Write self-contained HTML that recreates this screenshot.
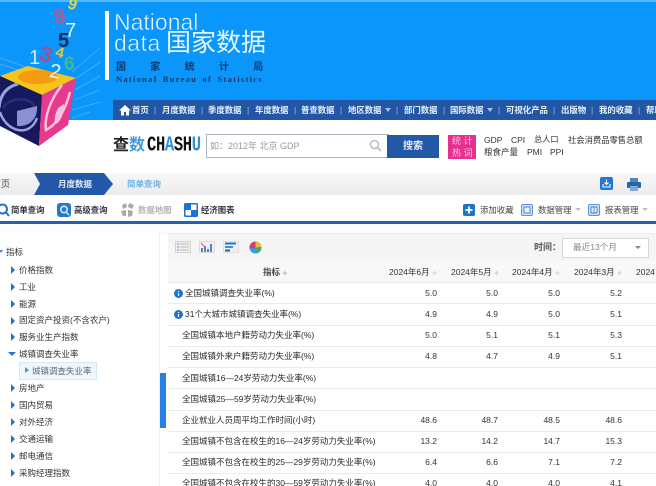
<!DOCTYPE html>
<html><head><meta charset="utf-8">
<style>
html,body{margin:0;padding:0;background:#fff}
#p{position:relative;width:656px;height:486px;overflow:hidden;background:#fff;font-family:"Liberation Sans","Noto Sans CJK SC",sans-serif;font-size:8.5px;color:#333;filter:blur(.35px)}
#p div{position:absolute;white-space:nowrap}
.n{top:100px;height:20px;line-height:20px;color:#e8f0fa;font-size:8.4px;font-weight:bold}
.q{top:100px;height:20px;line-height:20px;color:#9db8de;font-size:8.4px}
.t{line-height:12px;color:#333;font-size:8.5px}
.tr{position:absolute}
.ar{width:0;height:0;border:4px solid transparent;border-left:4.5px solid #1f74cf;border-right:0}
.ln{left:168px;width:488px;height:1px;background:#ebebeb}
.l{left:182px;color:#2a2a2a;font-size:8.5px;line-height:12px}
.v{width:40px;text-align:right;font-size:8.5px;line-height:12px;color:#333}
.h{top:266px;font-size:8.5px;line-height:12px;color:#333}
.s{color:#bbb;font-size:6px}
.k{font-size:8.5px;line-height:12px;color:#333}
.b{font-size:8.4px;line-height:12px;color:#334;font-weight:bold}
</style></head><body><div id="p">
<!-- header -->
<div style="left:0;top:0;width:656px;height:120px;background:#0a96fb"></div>
<div style="left:0;top:0;width:656px;height:2px;background:#4fb8fb"></div>
<svg style="position:absolute;left:0;top:0" width="110" height="150" viewBox="0 0 110 150">
<g stroke="#8ed0fc" stroke-width=".8" fill="none" opacity=".55"><path d="M0 58 L40 72M0 64L30 74M72 72L100 48M74 80L100 62M75 90L100 76M74 100L100 90M72 110L100 102M72 118L90 112"/></g>
<polygon points="0,76 28,66 76,78 42,95" fill="#f6c41a"/>
<ellipse cx="38" cy="77" rx="20" ry="7" fill="#f49b10"/>
<polygon points="0,76 42,95 39,146 0,126" fill="#16195c"/>
<polygon points="42,95 76,78 68,125 39,146" fill="#e9398e"/>
<path d="M18 84 C6 87 0 95 -1 108" fill="none" stroke="#9aa0dc" stroke-width="3"/>
<path d="M0 112 C6 132 30 138 37 118" fill="none" stroke="#9aa0dc" stroke-width="2.5"/>
<path d="M3 108 C8 98 28 96 35 106" fill="none" stroke="#262b78" stroke-width="3"/>
<path d="M17 111L37 106C38 118 30 127 17 126Z" fill="#8b90d0"/>
<path d="M62 85C50 100 44 118 46 130C58 124 66 108 70 92" fill="none" stroke="#f8c3dd" stroke-width="2.5"/>
<path d="M58 108C54 116 54 122 56 124C62 120 64 112 64 104Z" fill="#f8c3dd"/>
<text x="29" y="64" font-size="20" fill="#cfeafc" font-family="Liberation Sans">1</text>
<text x="40" y="62" font-size="22" font-weight="bold" fill="#b14a8a" font-family="Liberation Sans" transform="rotate(15 47 55)">3</text>
<text x="50" y="78" font-size="20" fill="#e8f4fc" font-family="Liberation Sans" transform="rotate(10 56 70)">2</text>
<text x="56" y="58" font-size="15" font-weight="bold" fill="#e3c73f" font-family="Liberation Sans" transform="rotate(15 62 52)">4</text>
<text x="64" y="70" font-size="19" font-weight="bold" fill="#3fb98c" font-family="Liberation Sans">6</text>
<text x="58" y="47" font-size="20" font-weight="bold" fill="#0e2a5c" font-family="Liberation Sans">5</text>
<text x="65" y="37" font-size="20" fill="#e8f4fc" font-family="Liberation Sans">7</text>
<text x="54" y="23" font-size="20" font-weight="bold" fill="#b85a8c" font-family="Liberation Sans" transform="rotate(-12 60 16)">8</text>
<text x="68" y="10" font-size="16" font-weight="bold" fill="#d8d65a" font-family="Liberation Sans" transform="rotate(20 74 5)">9</text>
</svg>
<div style="left:105px;top:11px;width:4px;height:69px;background:#fff"></div>
<div style="left:114px;top:8px;font-size:23px;line-height:28px;color:#eaf6fe;-webkit-text-stroke:.5px #0a96fb">National</div>
<div style="left:114px;top:29px;font-size:23px;line-height:28px;color:#eaf6fe;letter-spacing:.5px;-webkit-text-stroke:.5px #0a96fb">data</div>
<div style="left:166px;top:28px;font-size:25px;line-height:30px;color:#eaf6fe">国家数据</div>
<div style="left:116px;top:62px;font-size:10px;line-height:12px;color:#123a6e;font-weight:bold;letter-spacing:24.3px">国家统计局</div>
<div style="left:116px;top:74px;font-family:'Liberation Serif',serif;font-size:8.5px;line-height:10px;color:#123a6e;font-weight:bold;letter-spacing:1.27px;word-spacing:2px">National Bureau of Statistics</div>
<!-- nav -->
<div style="left:113px;top:100px;width:543px;height:20px;background:#2357a6"></div>
<svg style="position:absolute;left:119px;top:104px" width="12" height="12" viewBox="0 0 12 12"><path d="M6 1L0 6.5H2V11.5H5V8H7V11.5H10V6.5H12Z" fill="#fff"/></svg>
<div class="n" style="left:132px">首页</div><div class="q" style="left:154px">|</div>
<div class="n" style="left:162px">月度数据</div><div class="q" style="left:201px">|</div>
<div class="n" style="left:208px">季度数据</div><div class="q" style="left:247px">|</div>
<div class="n" style="left:255px">年度数据</div><div class="q" style="left:294px">|</div>
<div class="n" style="left:301px">普查数据</div><div class="q" style="left:340px">|</div>
<div class="n" style="left:348px">地区数据</div><div class="tr" style="left:385px;top:108px;width:0;height:0;border:3.5px solid transparent;border-top:4px solid #a9c0e2;border-bottom:0"></div><div class="q" style="left:396px">|</div>
<div class="n" style="left:404px">部门数据</div><div class="q" style="left:443px">|</div>
<div class="n" style="left:450px">国际数据</div><div class="tr" style="left:487px;top:108px;width:0;height:0;border:3.5px solid transparent;border-top:4px solid #a9c0e2;border-bottom:0"></div><div class="q" style="left:498px">|</div>
<div class="n" style="left:506px">可视化产品</div><div class="q" style="left:553px">|</div>
<div class="n" style="left:561px">出版物</div><div class="q" style="left:591px">|</div>
<div class="n" style="left:599px">我的收藏</div><div class="q" style="left:638px">|</div>
<div class="n" style="left:646px">帮助</div>
<!-- search -->
<div style="left:113px;top:136px;font-size:16px;line-height:20px;font-weight:bold;color:#222">查<span style="color:#3d9be0">数</span></div>
<div style="left:147px;top:136px;font-size:15.5px;line-height:20px;font-weight:bold;color:#111;font-family:'Liberation Mono',monospace;letter-spacing:-.35px;transform:scaleY(1.35);transform-origin:0 60%">CH<span style="color:#2c8fd8">A</span>SH<span style="color:#2c8fd8">U</span></div>
<div style="left:206px;top:134px;width:181px;height:22px;border:1px solid #a9b4c0;border-top-width:1.5px;background:#fff"></div>
<div style="left:210px;top:140px;font-size:9px;line-height:12px;color:#999">如：2012年 北京 GDP</div>
<svg style="position:absolute;left:369px;top:139px" width="13" height="13" viewBox="0 0 13 13"><circle cx="5.5" cy="5.5" r="4" fill="none" stroke="#b5b5b5" stroke-width="1.3"/><path d="M8.5 8.5L12 12" stroke="#b5b5b5" stroke-width="1.5"/></svg>
<div style="left:387px;top:135px;width:52px;height:23px;line-height:23px;background:#2258a8;color:#e3ecf8;text-align:center;font-size:10px;font-weight:bold">搜索</div>
<div style="left:448px;top:135px;width:28px;height:24px;background:#e5308f"></div>
<div style="left:452px;top:135px;width:24px;font-size:9px;line-height:11.5px;color:#f5c8e0;letter-spacing:2.5px;white-space:normal;padding-top:1px">统计<br>热词</div>
<div class="k" style="left:484px;top:134px">GDP</div>
<div class="k" style="left:511px;top:134px">CPI</div>
<div class="k" style="left:534px;top:134px;font-size:8.2px">总人口</div>
<div class="k" style="left:568px;top:134px;font-size:8.3px">社会消费品零售总额</div>
<div class="k" style="left:484px;top:146px">粮食产量</div>
<div class="k" style="left:527px;top:146px">PMI</div>
<div class="k" style="left:550px;top:146px">PPI</div>
<!-- breadcrumb -->
<div style="left:0;top:173px;width:656px;height:22px;background:linear-gradient(#f8f8f8,#ebebeb)"></div>
<div style="left:-8px;top:178px;font-size:9px;line-height:12px;color:#444">首页</div>
<svg style="position:absolute;left:34px;top:173px" width="80" height="22"><polygon points="0,0 70,0 79,11 70,22 0,22 6,11" fill="#2358a8"/></svg>
<div style="left:58px;top:178px;font-size:8.5px;line-height:12px;color:#e3ecf8;font-weight:bold">月度数据</div>
<div style="left:127px;top:178px;font-size:8.5px;line-height:12px;color:#6cb4e8;font-weight:bold">简单查询</div>
<svg style="position:absolute;left:600px;top:177px" width="13" height="13" viewBox="0 0 13 13"><rect width="13" height="13" rx="2" fill="#1f79d4"/><path d="M6.5 2.5V7.5M4.5 5.5L6.5 7.5L8.5 5.5M3 7V10H10V7" stroke="#fff" fill="none" stroke-width="1.1"/></svg>
<svg style="position:absolute;left:627px;top:178px" width="14" height="13" viewBox="0 0 14 13"><rect x="3" y="0" width="8" height="4" fill="#4d86c6"/><rect x="0" y="4" width="14" height="6" rx="1" fill="#2a64a8"/><rect x="3" y="8" width="8" height="5" fill="#7fa8d8"/></svg>
<!-- toolbar -->
<svg style="position:absolute;left:-4px;top:203px" width="14" height="14" viewBox="0 0 14 14"><circle cx="6.5" cy="6" r="4.5" fill="none" stroke="#2273c9" stroke-width="2"/><path d="M10 9.5L13 13" stroke="#2273c9" stroke-width="2"/></svg>
<div class="b" style="left:11px;top:204px">简单查询</div>
<svg style="position:absolute;left:57px;top:203px" width="14" height="14" viewBox="0 0 14 14"><rect width="14" height="14" rx="3" fill="#2279d2"/><circle cx="7" cy="6.5" r="4" fill="#d8ebfa"/><circle cx="7" cy="6.5" r="2.4" fill="#2279d2"/><path d="M9.5 9.5L12 12" stroke="#fff" stroke-width="1.2"/></svg>
<div class="b" style="left:74px;top:204px">高级查询</div>
<svg style="position:absolute;left:121px;top:203px" width="13" height="14" viewBox="0 0 13 14"><path d="M1 2L5 0L6 4L2 6ZM8 0L13 2L11 6L7 4ZM0 8L5 7L5 13L2 13ZM7 7L12 8L11 13L7 14Z" fill="#a9a9a9"/></svg>
<div class="b" style="left:138px;top:204px;color:#b4b4b4">数据地图</div>
<svg style="position:absolute;left:184px;top:203px" width="14" height="14" viewBox="0 0 14 14"><rect width="14" height="14" rx="1.5" fill="#1d73cf"/><rect x="7" y="1.5" width="5.5" height="5.5" fill="#fff"/><rect x="1.5" y="7" width="5.5" height="5.5" fill="#fff"/></svg>
<div class="b" style="left:201px;top:204px">经济图表</div>
<svg style="position:absolute;left:463px;top:204px" width="12" height="12" viewBox="0 0 12 12"><rect width="12" height="12" rx="2" fill="#1d73cf"/><path d="M6 2.5V9.5M2.5 6H9.5" stroke="#fff" stroke-width="1.8"/></svg>
<div class="k" style="left:480px;top:204px;color:#444;font-size:8.4px">添加收藏</div>
<svg style="position:absolute;left:521px;top:204px" width="12" height="12" viewBox="0 0 12 12"><rect x=".5" y=".5" width="11" height="11" rx="1.5" fill="#cfe2f6" stroke="#5c94d4"/><rect x="3" y="3" width="6" height="6" fill="#e8f2fb" stroke="#3f7fc8" stroke-width=".9"/></svg>
<div class="k" style="left:538px;top:204px;color:#444;font-size:8.4px">数据管理</div>
<div class="tr" style="left:575px;top:208px;width:0;height:0;border:3px solid transparent;border-top:3.5px solid #c0c0c0;border-bottom:0"></div>
<svg style="position:absolute;left:588px;top:204px" width="12" height="12" viewBox="0 0 12 12"><rect x=".5" y=".5" width="11" height="11" rx="1.5" fill="#cfe2f6" stroke="#5c94d4"/><path d="M3 3H9V9H3ZM6 3V9" fill="#e8f2fb" stroke="#3f7fc8" stroke-width=".9"/></svg>
<div class="k" style="left:605px;top:204px;color:#444;font-size:8.4px">报表管理</div>
<div class="tr" style="left:642px;top:208px;width:0;height:0;border:3px solid transparent;border-top:3.5px solid #c0c0c0;border-bottom:0"></div>
<div style="left:0;top:221px;width:656px;height:3px;background:#2361b3"></div>
<div style="left:0;top:224px;width:656px;height:10px;background:#fbfbfb"></div>
<div style="left:0;top:232px;width:159px;height:254px;background:#fff;border-right:1px solid #ececec"></div>
<div style="left:160px;top:373px;width:6px;height:55px;background:#2a7fe6"></div>
<!-- tree -->
<div class="tr" style="left:-1px;top:250px;width:0;height:0;border:2.5px solid transparent;border-top:3.5px solid #4d86c6;border-bottom:0"></div>
<div class="t" style="left:6px;top:246px">指标</div>
<div class="tr ar" style="left:11px;top:266px"></div><div class="t" style="left:19px;top:264px">价格指数</div>
<div class="tr ar" style="left:11px;top:283px"></div><div class="t" style="left:19px;top:281px">工业</div>
<div class="tr ar" style="left:11px;top:300px"></div><div class="t" style="left:19px;top:298px">能源</div>
<div class="tr ar" style="left:11px;top:317px"></div><div class="t" style="left:19px;top:314px">固定资产投资(不含农户)</div>
<div class="tr ar" style="left:11px;top:333px"></div><div class="t" style="left:19px;top:331px">服务业生产指数</div>
<div class="tr" style="left:8px;top:352px;width:0;height:0;border:4px solid transparent;border-top:4px solid #1f74cf;border-bottom:0"></div><div class="t" style="left:19px;top:348px">城镇调查失业率</div>
<div style="left:19px;top:362px;width:76px;height:16px;background:#eef7fc;border:1px solid #d2e9f6"></div>
<div class="tr" style="left:25px;top:367px;width:0;height:0;border:3.5px solid transparent;border-left:4px solid #4a94d8;border-right:0"></div><div class="t" style="left:32px;top:365px;color:#5a6a78">城镇调查失业率</div>
<div class="tr ar" style="left:11px;top:384px"></div><div class="t" style="left:19px;top:382px">房地产</div>
<div class="tr ar" style="left:11px;top:401px"></div><div class="t" style="left:19px;top:399px">国内贸易</div>
<div class="tr ar" style="left:11px;top:418px"></div><div class="t" style="left:19px;top:416px">对外经济</div>
<div class="tr ar" style="left:11px;top:435px"></div><div class="t" style="left:19px;top:433px">交通运输</div>
<div class="tr ar" style="left:11px;top:452px"></div><div class="t" style="left:19px;top:450px">邮电通信</div>
<div class="tr ar" style="left:11px;top:469px"></div><div class="t" style="left:19px;top:467px">采购经理指数</div>
<!-- right panel toolbar -->
<div style="left:168px;top:233px;width:488px;height:28px;background:#f5f5f5;border-top:1px solid #ececec"></div>
<svg style="position:absolute;left:175px;top:241px" width="16" height="12" viewBox="0 0 16 12"><rect x=".5" y=".5" width="15" height="11" fill="#f0f0f0" stroke="#d4d4d4"/><path d="M2 3H4M2 6H4M2 9H4" stroke="#5c94d4"/><path d="M5 3H14M5 6H14M5 9H14" stroke="#bbb"/></svg>
<svg style="position:absolute;left:199px;top:241px" width="16" height="12" viewBox="0 0 16 12"><rect x=".5" y=".5" width="15" height="11" fill="#f0f0f0" stroke="#dcdcdc"/><path d="M3 11V7M6 11V5M9 11V8M12 11V3" stroke="#2a6cb8" stroke-width="1.6"/><path d="M2 2L6 6" stroke="#c2578c"/></svg>
<svg style="position:absolute;left:223px;top:241px" width="16" height="12" viewBox="0 0 16 12"><rect x=".5" y=".5" width="15" height="11" fill="#f0f0f0" stroke="#e0e0e0"/><path d="M2 2.5H13" stroke="#1f74cf" stroke-width="2"/><path d="M2 6H10" stroke="#2a9ade" stroke-width="2"/><path d="M2 9.5H7" stroke="#2a5ea8" stroke-width="2"/></svg>
<svg style="position:absolute;left:249px;top:241px" width="13" height="13" viewBox="0 0 13 13"><circle cx="6.5" cy="6.5" r="6" fill="#3a9ae0"/><path d="M6.5 6.5L6.5 .5A6 6 0 0 0 .6 7.5Z" fill="#d83a6c"/><path d="M6.5 6.5L6.5 .5A6 6 0 0 1 12.5 6Z" fill="#e8b93c"/><path d="M6.5 6.5L12.5 6A6 6 0 0 1 8 12.3Z" fill="#3cae78"/></svg>
<div style="left:534px;top:241px;font-size:9px;line-height:12px;color:#555;font-weight:bold">时间：</div>
<div style="left:562px;top:238px;width:85px;height:18px;background:#fff;border:1px solid #d8d8d8"></div>
<div style="left:573px;top:241px;font-size:8.6px;line-height:12px;color:#888">最近13个月</div>
<div class="tr" style="left:635px;top:246px;width:0;height:0;border:3px solid transparent;border-top:3.5px solid #888;border-bottom:0"></div>
<!-- table head -->
<div style="left:168px;top:261px;width:488px;height:21px;background:#f8f8f8"></div>
<div class="h" style="left:263px;color:#444;font-weight:bold">指标 <span class="s">≑</span></div>
<div class="h" style="left:389px">2024年6月 <span class="s">≑</span></div>
<div class="h" style="left:451px">2024年5月 <span class="s">≑</span></div>
<div class="h" style="left:512px">2024年4月 <span class="s">≑</span></div>
<div class="h" style="left:574px">2024年3月 <span class="s">≑</span></div>
<div class="h" style="left:636px">2024</div>
<!-- rows -->
<div class="ln" style="top:282px"></div><div class="ln" style="top:303px"></div><div class="ln" style="top:325px"></div><div class="ln" style="top:346px"></div><div class="ln" style="top:367px"></div><div class="ln" style="top:388px"></div><div class="ln" style="top:410px"></div><div class="ln" style="top:431px"></div><div class="ln" style="top:452px"></div><div class="ln" style="top:473px"></div>
<svg style="position:absolute;left:174px;top:289px" width="9" height="9" viewBox="0 0 9 9"><circle cx="4.5" cy="4.5" r="4.5" fill="#1f74cf"/><path d="M4.5 2V3M4.5 4V7" stroke="#fff" stroke-width="1.2"/></svg>
<svg style="position:absolute;left:174px;top:310px" width="9" height="9" viewBox="0 0 9 9"><circle cx="4.5" cy="4.5" r="4.5" fill="#1f74cf"/><path d="M4.5 2V3M4.5 4V7" stroke="#fff" stroke-width="1.2"/></svg>
<div class="l" style="left:185px;top:287px">全国城镇调查失业率(%)</div>
<div class="l" style="left:185px;top:308px">31个大城市城镇调查失业率(%)</div>
<div class="l" style="top:329px">全国城镇本地户籍劳动力失业率(%)</div>
<div class="l" style="top:350px">全国城镇外来户籍劳动力失业率(%)</div>
<div class="l" style="top:372px">全国城镇16—24岁劳动力失业率(%)</div>
<div class="l" style="top:393px">全国城镇25—59岁劳动力失业率(%)</div>
<div class="l" style="top:414px">企业就业人员周平均工作时间(小时)</div>
<div class="l" style="top:435px">全国城镇不包含在校生的16—24岁劳动力失业率(%)</div>
<div class="l" style="top:456px">全国城镇不包含在校生的25—29岁劳动力失业率(%)</div>
<div class="l" style="top:477px">全国城镇不包含在校生的30—59岁劳动力失业率(%)</div>
<div class="v" style="left:397px;top:287px">5.0</div><div class="v" style="left:458px;top:287px">5.0</div><div class="v" style="left:520px;top:287px">5.0</div><div class="v" style="left:582px;top:287px">5.2</div>
<div class="v" style="left:397px;top:308px">4.9</div><div class="v" style="left:458px;top:308px">4.9</div><div class="v" style="left:520px;top:308px">5.0</div><div class="v" style="left:582px;top:308px">5.1</div>
<div class="v" style="left:397px;top:329px">5.0</div><div class="v" style="left:458px;top:329px">5.1</div><div class="v" style="left:520px;top:329px">5.1</div><div class="v" style="left:582px;top:329px">5.3</div>
<div class="v" style="left:397px;top:350px">4.8</div><div class="v" style="left:458px;top:350px">4.7</div><div class="v" style="left:520px;top:350px">4.9</div><div class="v" style="left:582px;top:350px">5.1</div>
<div class="v" style="left:397px;top:414px">48.6</div><div class="v" style="left:458px;top:414px">48.7</div><div class="v" style="left:520px;top:414px">48.5</div><div class="v" style="left:582px;top:414px">48.6</div>
<div class="v" style="left:397px;top:435px">13.2</div><div class="v" style="left:458px;top:435px">14.2</div><div class="v" style="left:520px;top:435px">14.7</div><div class="v" style="left:582px;top:435px">15.3</div>
<div class="v" style="left:397px;top:456px">6.4</div><div class="v" style="left:458px;top:456px">6.6</div><div class="v" style="left:520px;top:456px">7.1</div><div class="v" style="left:582px;top:456px">7.2</div>
<div class="v" style="left:397px;top:477px">4.0</div><div class="v" style="left:458px;top:477px">4.0</div><div class="v" style="left:520px;top:477px">4.0</div><div class="v" style="left:582px;top:477px">4.1</div>
</div></body></html>
